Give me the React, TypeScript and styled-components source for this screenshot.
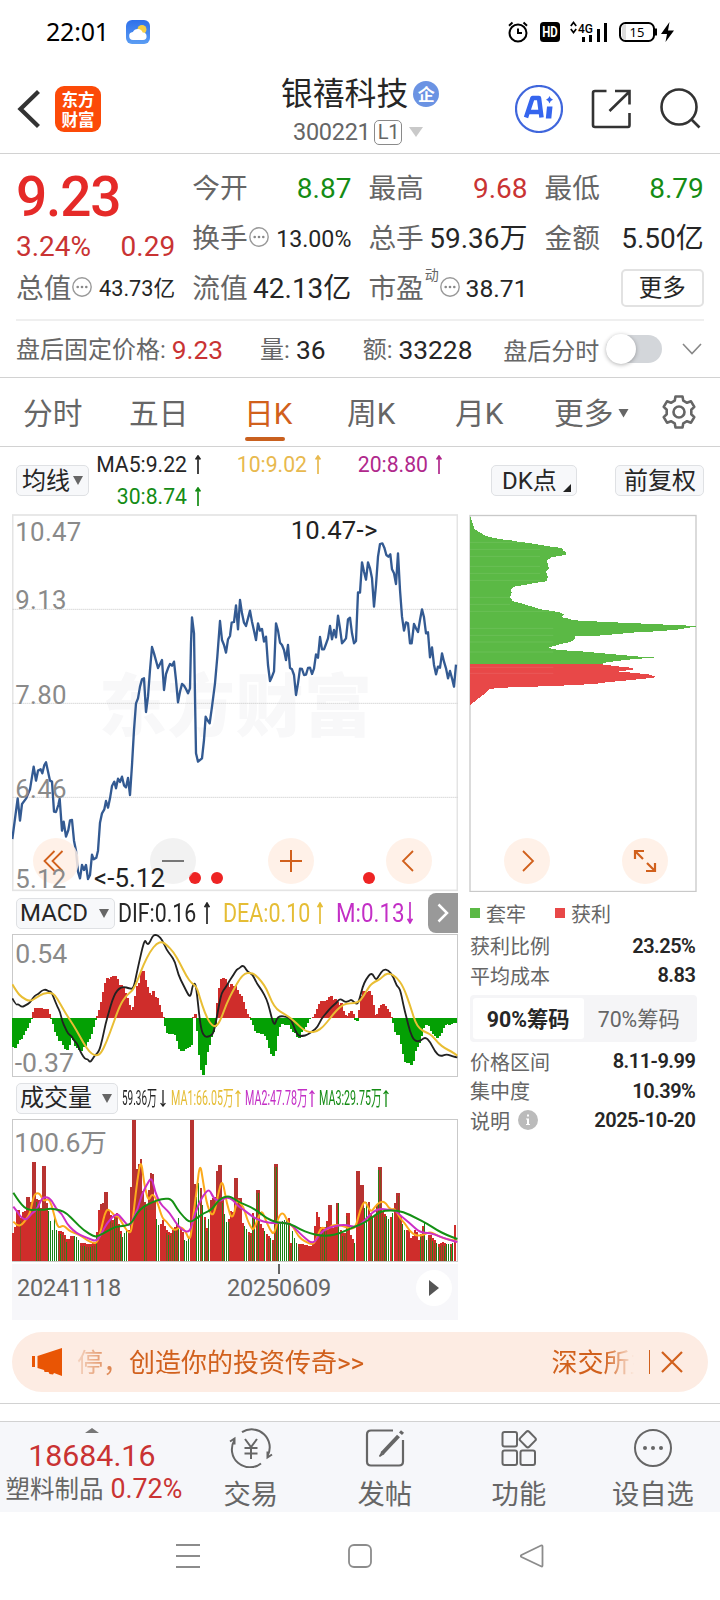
import React from "react";
import styled, { createGlobalStyle } from "styled-components";

const Global = createGlobalStyle`
  * { box-sizing: border-box; }
  body { margin: 0; background: #fff; color: #262626;
    font-family: Roboto, "Noto Sans CJK SC", sans-serif; font-weight: 400; }
  svg { display: block; flex: none; }
`;

const C = {
  red: "#c93333",
  green: "#158c15",
  grey: "#666",
  ink: "#262626",
  orange: "#d1601c",
  yellow: "#e5bd35",
  purple: "#c32fc6",
};

const Screen = styled.div`
  width: 720px;
  height: 1600px;
  overflow: hidden;
  display: flex;
  flex-direction: column;
  background: #fff;
`;

/* ---------- status bar ---------- */
const StatusBar = styled.div`
  height: 64px;
  flex: none;
  display: flex;
  align-items: center;
  padding: 0 45px 0 46px;
  color: #000;
`;
const Clock = styled.span`
  font: 400 25px/30px "Noto Sans", sans-serif;
  letter-spacing: -0.2px;
  width: 80px;
  margin-top: -2px;
`;
const StatusIcons = styled.div`
  margin-left: auto;
  display: flex;
  align-items: center;
`;

/* ---------- header ---------- */
const Header = styled.header`
  height: 90px;
  flex: none;
  display: flex;
  border-bottom: 1px solid #d2d2d2;
`;
const HeaderSide = styled.div<{ $w: number }>`
  width: ${(p) => p.$w}px;
  height: 90px;
  display: flex;
  align-items: center;
`;
const AppLogo = styled.div`
  width: 46px;
  height: 46px;
  margin: 0 0 0 15px;
  border-radius: 9px;
  background: #fc4a08;
  color: #fff;
  display: flex;
  flex-direction: column;
  align-items: center;
  justify-content: center;
  font: 700 16.5px/20px "Noto Sans CJK SC", sans-serif;
`;
const TitleBlock = styled.div`
  flex: 1;
  display: flex;
  flex-direction: column;
  padding-top: 11px;
`;
const TitleLine = styled.div`
  display: flex;
  align-items: center;
  height: 38px;
  padding-left: 21px;
  font-size: 31.8px;
  line-height: 38px;
`;
const CodeLine = styled.div`
  display: flex;
  align-items: center;
  height: 38px;
  padding-left: 33px;
  color: ${C.grey};
  font-size: 23.5px;
  letter-spacing: -0.3px;
`;
const CorpBadge = styled.span`
  width: 26px;
  height: 26px;
  margin-left: 5px;
  border-radius: 50%;
  background: #6b93e3;
  color: #fff;
  font: 700 17px/25px "Noto Sans CJK SC", sans-serif;
  text-align: center;
`;
const LevelTag = styled.span`
  width: 28px;
  height: 25px;
  margin: 0 7px 0 4px;
  border: 1.5px solid #8a8a8a;
  border-radius: 5px;
  font-size: 20px;
  line-height: 22px;
  text-align: center;
`;

/* ---------- quote ---------- */
const Quote = styled.section`
  flex: none;
  height: 167px;
  margin: 0 16px;
  padding-top: 10px;
  display: grid;
  grid-template-columns: repeat(4, 159.2px);
  grid-template-rows: repeat(3, 50px);
  column-gap: 17px;
  border-bottom: 2px solid #efefef;
`;
const LastPrice = styled.div`
  grid-row: 1 / 3;
  padding-top: 6px;
`;
const BigPrice = styled.div`
  font-size: 55px;
  font-weight: 500;
  line-height: 54px;
  color: #e52a28;
  letter-spacing: -1.2px;
`;
const Change = styled.div`
  display: flex;
  justify-content: space-between;
  height: 45px;
  align-items: center;
  font-size: 28px;
  color: ${C.red};
`;
const Cell = styled.div`
  display: flex;
  align-items: center;
  height: 50px;
`;
const Label = styled.span`
  font-size: 27.7px;
  line-height: 40px;
  color: ${C.grey};
  white-space: nowrap;
`;
const Value = styled.span<{ $c?: string; $s?: number }>`
  margin-left: auto;
  font-size: ${(p) => p.$s ?? 28}px;
  line-height: 40px;
  color: ${(p) => p.$c ?? C.ink};
  white-space: nowrap;
`;
const Dynamic = styled.sup`
  font-size: 14px;
  line-height: 14px;
  color: ${C.grey};
  align-self: flex-start;
  margin: 4px 1px 0 1px;
`;
const MoreButton = styled.button`
  width: 83px;
  height: 38px;
  margin-left: auto;
  margin-top: -3px;
  padding: 0;
  border: 2px solid #e2e2e2;
  border-radius: 5px;
  background: #fff;
  color: ${C.ink};
  font: 23.5px/34px Roboto, "Noto Sans CJK SC", sans-serif;
`;

/* ---------- after-hours ---------- */
const AfterHours = styled.section`
  height: 57px;
  flex: none;
  display: flex;
  align-items: center;
  padding: 0 18px 0 16px;
  border-bottom: 1px solid #d2d2d2;
  font-size: 24px;
  color: ${C.grey};
  white-space: nowrap;
`;
const AfterItem = styled.div<{ $w: number }>`
  width: ${(p) => p.$w}px;
  display: flex;
  align-items: center;
  padding-top: 2px;
  line-height: 34px;
`;
const AfterValue = styled.b<{ $c?: string }>`
  font-weight: 400;
  font-size: 26.3px;
  margin-left: 6px;
  color: ${(p) => p.$c ?? C.ink};
`;
const Toggle = styled.div`
  width: 56px;
  height: 28px;
  margin: 0 20px 0 7px;
  border-radius: 14px;
  background: #d3d6da;
  display: flex;
  align-items: center;
`;
const Knob = styled.i`
  width: 30px;
  height: 30px;
  border-radius: 50%;
  background: #fff;
  box-shadow: 0 1px 4px rgba(0, 0, 0, 0.3);
`;

/* ---------- period tabs ---------- */
const Tabs = styled.nav`
  height: 69px;
  flex: none;
  display: flex;
  border-bottom: 1px solid #d2d2d2;
  padding-left: 23px;
`;
const Tab = styled.div<{ $on?: boolean; $w: number }>`
  width: ${(p) => p.$w}px;
  height: 68px;
  display: flex;
  flex-direction: column;
  padding-top: 13px;
  font-size: 29.7px;
  line-height: 46px;
  color: ${(p) => (p.$on ? C.orange : C.grey)};
`;
const TabText = styled.span`
  display: flex;
  align-items: center;
  height: 46px;
`;
const TabLine = styled.i`
  width: 40px;
  height: 4px;
  margin-left: 1px;
  border-radius: 2px;
  background: #c9601f;
`;

/* ---------- moving average row ---------- */
const MaRow = styled.div`
  height: 67px;
  flex: none;
  display: flex;
  padding: 0 16px;
`;
const Chip = styled.button<{ $w: number }>`
  width: ${(p) => p.$w}px;
  height: 31px;
  flex: none;
  display: flex;
  align-items: center;
  justify-content: space-between;
  padding: 0 5px;
  border: 1.5px solid #dfe1e4;
  border-radius: 5px;
  background: #f7f8fa;
  color: ${C.ink};
  font: 24px/28px Roboto, "Noto Sans CJK SC", sans-serif;
  white-space: nowrap;
`;
const MaChip = styled(Chip)`
  margin-top: 18px;
`;
const MaList = styled.div`
  width: 390px;
  margin-left: 7px;
  padding-top: 1px;
  display: grid;
  grid-template-columns: 107px 120px 121px;
  grid-template-rows: 32px 32px;
`;
const MaItem = styled.div<{ $c: string }>`
  display: flex;
  align-items: center;
  justify-content: flex-end;
  gap: 6px;
  font-size: 21.2px;
  color: ${(p) => p.$c};
  white-space: nowrap;
`;

/* ---------- chart area ---------- */
const Charts = styled.div`
  flex: none;
  height: 818px;
  display: flex;
  padding-left: 12px;
`;
const Left = styled.div`
  width: 446px;
  position: relative;
`;
const Right = styled.aside`
  width: 229px;
  margin-left: 11px;
  position: relative;
`;
const RoundButton = styled.button<{ $x: number; $grey?: boolean }>`
  position: absolute;
  left: ${(p) => p.$x}px;
  top: 324px;
  width: 46px;
  height: 46px;
  padding: 0;
  border: 0;
  border-radius: 50%;
  background: ${(p) => (p.$grey ? "rgba(235,235,235,.65)" : "rgba(255,238,228,.85)")};
`;
const IndicatorRow = styled.div`
  height: 42px;
  display: flex;
  align-items: center;
  padding-left: 4px;
`;
const Squeeze = styled.span<{ $w: number; $k: number; $s: number; $c: string; $gap: number }>`
  width: ${(p) => p.$w}px;
  margin-left: ${(p) => p.$gap}px;
  font-size: ${(p) => p.$s}px;
  line-height: 30px;
  color: ${(p) => p.$c};
  white-space: nowrap;
  transform: scaleX(${(p) => p.$k});
  transform-origin: left center;
`;
const NextButton = styled.button`
  width: 30px;
  height: 40px;
  margin-left: auto;
  padding: 0;
  display: flex;
  align-items: center;
  justify-content: center;
  border: 0;
  border-radius: 8px 0 0 8px;
  background: #999;
`;
const DateStrip = styled.div`
  height: 56px;
  margin-top: 2px;
  background: #f7f7fa;
  display: flex;
  align-items: flex-start;
  color: ${C.grey};
  font-size: 23.5px;
`;
const DateText = styled.span<{ $l: number }>`
  margin: 9px 0 0 ${(p) => p.$l}px;
  width: 105px;
  line-height: 30px;
  letter-spacing: -0.2px;
`;
const Tick = styled.i`
  position: absolute;
  left: 266px;
  top: 750px;
  width: 2px;
  height: 10px;
  background: #666;
`;
const PlayButton = styled.div`
  width: 36px;
  height: 36px;
  margin: 6px 6px 0 auto;
  border-radius: 50%;
  background: #fff;
  display: flex;
  align-items: center;
  justify-content: center;
`;

/* ---------- chip stats ---------- */
const Legend = styled.div`
  height: 42px;
  display: flex;
  align-items: center;
  font-size: 20px;
  color: ${C.grey};
`;
const Square = styled.i<{ $c: string; $l: number }>`
  width: 10px;
  height: 10px;
  margin: 0 6px 0 ${(p) => p.$l}px;
  background: ${(p) => p.$c};
`;
const Stat = styled.div`
  height: 29.4px;
  padding: 0 3px 0 1px;
  display: flex;
  align-items: center;
  justify-content: space-between;
  font-size: 20px;
  color: ${C.grey};
  b { color: ${C.ink}; font-weight: 600; letter-spacing: -0.5px; margin-right: -0.4px; }
  span { display: flex; align-items: center; gap: 8px; }
`;
const Segment = styled.div`
  height: 47px;
  margin: 5px 1px;
  padding: 3px;
  display: flex;
  border-radius: 4px;
  background: #f5f5f7;
`;
const SegmentItem = styled.div<{ $on?: boolean }>`
  flex: 1;
  border-radius: 3px;
  background: ${(p) => (p.$on ? "#fff" : "transparent")};
  color: ${(p) => (p.$on ? C.ink : C.grey)};
  font-weight: ${(p) => (p.$on ? 700 : 400)};
  font-size: 21.3px;
  line-height: 43px;
  text-align: center;
`;

/* ---------- banner ---------- */
const Banner = styled.div`
  height: 60px;
  flex: none;
  margin: 0 12px 11px;
  padding: 0 25px 0 20px;
  display: flex;
  align-items: center;
  border-radius: 30px;
  background: #fdece3;
  color: ${C.orange};
  font-size: 26px;
`;
const Marquee = styled.div`
  flex: 1;
  height: 42px;
  margin: 0 13px 0 15px;
  display: flex;
  justify-content: space-between;
  overflow: hidden;
  line-height: 44px;
  white-space: nowrap;
  mask-image: linear-gradient(90deg, transparent -10px, #000 50px, #000 calc(100% - 32px), transparent calc(100% - 2px));
`;
const MarqueeTail = styled.span`
  width: 84px;
  overflow: hidden;
`;
const Divider = styled.i`
  width: 1.5px;
  height: 24px;
  margin-right: 11px;
  background: ${C.orange};
`;

/* ---------- bottom ---------- */
const Strip = styled.div`
  height: 18px;
  flex: none;
  border-top: 1px solid #d2d2d2;
`;
const BottomBar = styled.footer`
  height: 91px;
  flex: none;
  display: flex;
  border-top: 1px solid #d2d2d2;
  background: #f6f7fa;
`;
const IndexBox = styled.div`
  width: 184px;
  display: flex;
  flex-direction: column;
  align-items: center;
  padding-top: 6px;
  color: ${C.red};
`;
const IndexValue = styled.div`
  margin-top: 5px;
  font-size: 30.3px;
  line-height: 36px;
`;
const IndexName = styled.div`
  font-size: 26.8px;
  line-height: 31px;
  white-space: nowrap;
  margin-left: 4px;
  em { font-style: normal; font-size: 24.5px; color: ${C.grey}; margin-right: 7px; }
`;
const Action = styled.div`
  width: 134.3px;
  display: flex;
  flex-direction: column;
  align-items: center;
  padding-top: 6px;
  color: ${C.grey};
  font-size: 27.3px;
  line-height: 44px;
  white-space: nowrap;
  gap: 5px;
`;
const SystemNav = styled.div`
  flex: 1;
  display: flex;
  align-items: center;
  justify-content: space-between;
  padding: 0 176px;
`;

/* ---------- small drawings ---------- */
const Tri = ({ w = 10, h = 9, c = "#666" }: { w?: number; h?: number; c?: string }) => (
  <svg width={w} height={h} viewBox="0 0 10 9" preserveAspectRatio="none"><path d="M0 0h10L5 9z" fill={c} /></svg>
);
const Arrow = ({ down, h = 19, w = 1.7 }: { down?: boolean; h?: number; w?: number }) => (
  <svg width="10" height={h} viewBox="0 0 10 19" preserveAspectRatio="none" fill="none" stroke="currentColor" strokeWidth={w}>
    {down ? <path d="M5 0v18M2.6 14.5 5 18l2.4-3.5" /> : <path d="M5 19V1M2.6 4.5 5 1l2.4 3.5" />}
  </svg>
);
const Dots = ({ m = "0" }: { m?: string }) => (
  <svg width="20" height="20" viewBox="0 0 20 20" style={{ margin: m }}>
    <circle cx="10" cy="10" r="9.2" fill="none" stroke="#999" strokeWidth="1.4" />
    <g fill="#888"><circle cx="5.7" cy="10" r="1.3" /><circle cx="10" cy="10" r="1.3" /><circle cx="14.3" cy="10" r="1.3" /></g>
  </svg>
);

/* ---------- chart data ---------- */
type Pt = [number, number];
const parse = (s: string, dx = 0): Pt[] =>
  s.trim().split(/\s+/).map((p) => {
    const [x, y] = p.split(",").map(Number);
    return [x + dx, y];
  });
const join = (a: string, b: string): Pt[] => [...parse(a), ...parse(b, 690)];
const toPoints = (p: Pt[]) => p.map((q) => q.join(",")).join(" ");
const sample = (p: Pt[], x: number) => {
  const i = p.findIndex((q) => q[0] >= x);
  if (i < 0) return p[p.length - 1][1];
  if (i === 0) return p[0][1];
  const [x0, y0] = p[i - 1];
  const [x1, y1] = p[i];
  return y0 + ((y1 - y0) * (x - x0)) / (x1 - x0 || 1);
};
const smooth = (p: Pt[]) => {
  let d = `M${p[0]}`;
  for (let i = 1; i < p.length - 1; i++) {
    d += `Q${p[i]} ${(p[i][0] + p[i + 1][0]) / 2},${(p[i][1] + p[i + 1][1]) / 2}`;
  }
  return d + `L${p[p.length - 1]}`;
};

const price = join(
  `37,987 53,865 60,932 66,882 78,866 90,838 101,770 108,812 114,782 122,778 127,790 133,765 138,757 150,812 156,815 162,905 168,906 175,885 179,866 186,962 191,935 198,980 205,960 210,931 216,930 222,992 228,1022 234,1085 240,1105 246,1065 252,1080 258,1065 264,1107 270,1095 276,1034 281,1048 289,1043 294,1022 300,938 306,910 313,898 318,873 324,893 330,865 336,828 343,815 348,835 354,806 360,816 366,800 372,826 378,832 384,804 390,855 396,765 402,660 408,580 414,565 420,530 426,508 432,505 438,606 444,560 450,480 456,411 462,430 474,474 486,450 492,540 498,492 504,475 510,462 516,467 522,455 528,510 534,577 540,545 546,522 552,527 558,537 564,550 570,535 573,400 576,322 582,370 585,560 588,730 594,755 606,745 612,690 617,620 622,630 629,640 636,590 645,520 652,440 660,333 666,390 672,405 678,428 684,388 690,378`,
  `5,338 12,336 18,286 24,358 30,270 36,310 42,338 48,348 54,325 60,302 66,335 72,362 78,390 84,340 90,362 96,357 102,395 108,380 114,465 120,513 126,500 132,484 138,340 144,362 150,398 156,405 162,420 168,450 174,405 180,474 186,478 192,495 198,555 204,520 210,476 216,477 222,495 228,494 234,474 240,473 246,492 252,476 258,433 264,443 270,381 276,418 282,418 288,402 294,385 300,348 306,388 312,360 318,382 324,317 330,355 336,400 342,393 348,385 354,328 360,323 366,370 372,400 378,393 384,247 390,248 396,157 402,185 408,209 414,157 420,175 426,205 432,290 438,225 444,140 450,102 457,100 463,113 469,135 475,140 481,133 486,178 492,190 498,222 504,130 510,240 516,320 522,362 528,337 534,340 540,400 545,400 552,342 558,355 564,366 570,330 576,298 582,322 588,370 594,367 600,442 606,412 612,465 618,493 624,470 630,473 636,430 642,455 648,475 654,505 660,483 666,505 672,530 678,464`
);
const hist = join(
  `37,468 45,475 48,472 54,455 60,448 66,445 72,430 78,420 84,412 90,393 96,384 99,372 102,355 126,354 129,357 144,358 150,378 153,383 159,398 164,420 174,443 180,456 186,452 192,470 198,480 206,478 212,442 218,448 224,455 228,478 234,470 240,483 246,485 252,465 258,468 264,452 270,445 276,425 282,405 288,384 294,375 300,352 306,330 312,295 318,272 322,265 330,267 336,260 345,258 352,268 358,285 366,285 374,305 380,318 387,340 393,362 399,355 405,325 411,288 417,285 423,248 430,244 436,270 442,290 448,310 454,315 460,303 466,322 472,325 478,345 484,365 490,380 496,408 502,428 510,432 526,434 534,460 540,485 550,483 558,475 570,470 575,465 577,400 579,384 586,373 589,385 595,460 600,518 606,550 610,556 616,525 622,485 628,465 634,440 640,425 646,410 648,384 651,345 656,310 661,270 668,265 672,262 678,270 684,286`,
  `0,295 6,275 10,288 20,286 24,315 30,310 36,322 42,342 48,365 54,377 60,383 66,393 72,410 78,428 90,430 100,433 108,438 114,455 120,485 128,500 135,490 140,450 146,417 152,403 162,402 170,410 175,400 180,410 186,420 192,428 198,430 204,448 210,440 216,420 222,417 228,408 234,395 240,385 246,384 252,380 258,370 264,352 272,333 290,333 298,320 304,318 308,330 316,328 322,335 328,345 334,340 340,362 346,375 352,378 358,370 363,362 370,372 374,388 380,398 384,385 388,360 392,330 396,308 405,300 410,308 420,303 426,320 430,345 436,375 440,378 444,368 450,348 458,340 464,345 470,355 476,362 482,378 486,384 490,400 496,425 500,440 506,425 512,455 518,480 524,512 530,520 538,518 545,525 550,512 556,482 562,470 570,455 576,430 582,405 590,402 600,410 606,428 612,432 620,445 630,438 636,425 642,410 648,402 660,405 668,400 676,400`
);
const dif = join(
  `37,325 48,345 54,342 66,352 78,345 90,338 100,322 108,315 115,312 125,302 137,298 147,305 153,303 162,325 172,350 180,365 187,395 195,412 205,433 215,438 222,452 230,458 237,475 244,490 255,508 263,507 270,517 277,508 285,495 297,485 307,448 317,400 327,365 337,330 347,308 357,296 370,290 388,295 397,297 403,285 410,250 420,205 427,175 435,148 440,162 447,162 457,140 464,134 475,137 487,150 500,180 512,195 525,215 535,255 550,285 565,315 572,320 578,285 586,278 592,320 598,380 605,425 615,441 625,440 632,437 640,430 648,395 658,340 665,308 675,295 690,270`,
  `10,255 20,238 28,235 37,226 45,232 52,245 68,253 80,280 95,300 110,328 118,355 128,395 135,405 140,385 150,378 170,380 185,390 195,420 205,438 218,438 232,435 250,422 262,412 275,385 290,368 305,350 318,340 330,325 345,337 357,333 365,328 380,345 388,330 398,290 408,268 425,246 438,272 448,255 460,238 475,240 490,260 500,288 510,295 520,345 530,385 540,425 552,452 570,455 585,440 600,455 615,485 630,500 650,492 670,500 682,502`
);
const dea = join(
  `37,283 50,305 65,322 90,335 110,322 130,310 153,308 165,315 180,340 200,375 220,405 240,440 260,475 275,492 290,497 303,490 320,455 340,400 360,345 380,315 400,300 415,265 430,225 450,185 470,160 487,155 500,165 520,185 540,220 560,260 575,280 590,290 600,325 615,370 630,400 645,412 660,395 680,340`,
  `10,300 30,265 45,250 60,248 75,253 95,275 110,297 125,335 140,358 160,370 180,383 200,400 220,420 240,427 260,425 280,410 300,385 320,360 340,343 360,340 385,338 400,320 420,285 435,275 450,268 465,253 480,250 500,262 520,290 540,345 555,395 570,418 590,428 605,435 625,460 645,475 665,485 682,497`
);
const volume = join(
  `40,1030 46,1010 50,958 58,960 60,985 66,985 68,965 80,962 82,920 88,922 92,950 98,905 100,815 106,815 107,925 120,930 128,980 130,828 137,828 138,925 146,950 150,975 160,1020 164,965 170,1020 175,1022 190,1025 205,1052 215,1038 235,1040 240,1058 270,1062 290,1058 294,992 300,945 311,940 316,906 323,906 324,950 340,990 352,968 360,1012 372,1045 380,1015 390,1020 394,890 399,885 400,690 407,690 408,825 416,850 419,808 425,808 426,880 440,960 448,900 454,850 461,852 462,890 470,980 480,1010 490,990 500,1020 515,1030 525,1010 530,1015 536,975 542,1005 550,1025 558,1060 568,1040 573,960 574,690 581,690 582,960 588,845 594,960 600,840 606,920 616,980 625,1030 632,930 646,920 648,842 656,842 658,825 664,825 666,900 680,1000 690,985`,
  `0,960 10,965 16,864 23,864 24,950 28,925 35,925 40,1000 60,1030 68,1030 72,905 76,980 82,900 88,900 92,1000 110,1030 130,1050 135,950 136,823 143,823 145,1000 165,990 172,985 178,985 184,1060 192,1010 198,1060 205,1060 245,1068 255,1050 257,965 263,965 266,985 270,977 274,1010 290,1010 298,945 304,945 306,1015 320,1010 322,940 328,940 332,1015 345,1040 352,970 358,970 362,1030 376,1060 380,1040 382,842 388,842 391,990 394,885 400,885 403,965 412,935 418,935 425,975 440,980 448,832 455,832 458,960 480,990 490,970 502,909 508,909 512,970 525,1020 540,1020 545,1050 560,1010 566,1055 575,1030 585,985 590,1055 600,1030 625,1062 640,1055 650,1062 670,1060 675,1005 681,1005`
);
// Spans where falling days are drawn as slim green bars.
const fallingSpans: Pt[] = [
  [144, 172], [220, 240], [364, 384], [466, 478], [530, 537], [552, 568], [584, 596], [604, 610], [622, 628], [670, 680],
  [728, 744], [760, 768], [788, 794], [808, 816], [834, 862], [872, 892], [1010, 1018], [1062, 1068], [1090, 1100], [1112, 1118],
  [1156, 1166], [1176, 1182], [1202, 1216], [1268, 1280], [1292, 1296], [1308, 1312], [1338, 1346], [1356, 1362],
];
// Spans where rising and falling days alternate closely.
const mixedSpans: Pt[] = [
  [60, 66], [108, 126], [172, 200], [240, 290], [330, 362], [428, 444], [494, 530], [600, 630], [664, 690],
  [732, 780], [800, 830], [862, 900], [960, 985], [1010, 1040], [1108, 1160], [1190, 1215], [1260, 1362],
];
const within = (spans: Pt[], x: number) => spans.some(([a, b]) => x >= a && x < b);
const vma1 = join(
  `40,995 52,1008 66,1005 80,985 90,970 97,935 105,910 120,910 130,935 145,925 155,945 165,985 175,1015 190,1005 205,1020 220,1028 240,1035 260,1050 280,1060 292,1058 303,1020 318,955 335,965 345,980 355,978 372,1010 388,1030 395,1020 402,955 412,870 423,805 432,880 445,935 455,912 465,920 475,945 487,985 500,995 512,1012 525,1022 540,1010 555,1020 570,1055 577,1000 590,900 600,815 610,880 622,950 640,985 655,910 667,865 680,940`,
  `7,995 22,925 30,940 40,950 52,990 62,1010 70,1022 82,990 95,960 105,985 120,1020 133,1035 145,980 160,965 175,1000 190,1010 205,1040 225,1055 250,1065 260,1045 275,1008 290,1022 305,1005 325,1005 345,1010 365,1018 378,1010 390,960 405,930 415,955 425,965 435,950 450,935 465,935 480,960 495,955 510,985 525,1000 540,1025 560,1038 580,1035 600,1025 620,1035 640,1045 665,1050 680,1053`
);
const vma2 = join(
  `40,950 52,965 65,985 80,990 95,970 110,960 125,925 140,920 155,930 170,960 185,970 200,1000 220,1022 240,1035 265,1045 290,1055 305,1030 320,1000 350,968 365,985 388,1012 400,985 412,960 425,915 440,885 455,860 465,905 480,940 495,955 510,970 525,995 545,1020 570,1028 580,985 595,945 610,915 628,896 640,925 660,935 680,920`,
  `10,930 20,945 35,955 55,970 75,985 100,995 130,1000 155,998 180,1000 200,1020 220,1040 250,1064 270,1030 290,1015 310,1010 330,1005 350,1005 380,1012 395,1000 415,980 430,965 450,955 475,960 495,960 515,980 540,1000 570,1028 600,1028 630,1040 660,1050 682,1056`
);
const vma3 = join(
  `40,908 60,940 85,962 110,958 130,960 150,955 180,960 200,970 225,995 250,1020 285,1042 300,1035 320,1025 345,1010 375,1008 395,1000 410,970 430,950 460,935 475,930 495,925 515,928 530,955 550,980 570,998 590,985 610,970 635,960 660,925 685,918`,
  `10,925 30,938 60,950 85,965 110,985 140,998 180,1000 210,1018 240,1030 270,1037 300,1037 330,1030 350,1020 375,1010 400,1000 430,980 450,965 480,960 520,965 560,985 590,1000 620,1020 650,1035 682,1047`
);
// Holdings by price: depth from the top, then the width of the bar.
const holdings: Pt[] = parse(
  `30,32 36,50 44,72 60,82 75,92 100,98 120,102 150,105 170,109 205,113 235,118 262,123 290,126 305,130 312,138 318,142 318,149 300,152 275,156 262,165 263,180 268,190 258,200 263,215 260,228 228,233 200,238 165,244 152,252 155,262 150,275 158,288 182,294 215,304 240,312 267,316 300,322 312,328 305,336 325,340 337,345 390,348 475,352 565,356 650,360 708,362 708,364 684,368 655,373 598,378 522,382 468,387 420,391 346,394 343,402 332,410 305,416 285,422 266,427 280,432 305,435 370,439 425,444 480,449 533,454 583,457 520,462 475,467 430,473 430,478 468,483 508,487 525,492 478,499 522,503 567,508 592,516 540,522 487,527 435,532 405,536 337,540 235,544 143,547 90,551 75,565 55,580 30,600`
).map(([x, y]) => [y, x]);
const levels = Array.from({ length: 190 }, (_, i) => 33 + i * 3);

const barXs = Array.from({ length: 222 }, (_, i) => 37 + i * 6);

const PriceChart = () => (
  <svg width="446" height="378" viewBox="36 12 1338 1134" fontFamily="Roboto, sans-serif">
    <text x="296" y="664" fontSize="204" fontWeight="900" fontFamily="Noto Sans CJK SC" fill="#f8f8f9" textLength="820">东方财富</text>
    <rect x="38" y="15" width="1334" height="1126" fill="none" stroke="#e4e4e4" strokeWidth="5" />
    {[298, 580, 862].map((y) => (
      <path key={y} d={`M38 ${y}H1372`} stroke="#c4c4c4" strokeWidth="3" strokeDasharray="3 3" />
    ))}
    <polyline points={toPoints(price)} fill="none" stroke="#335a92" strokeWidth="7" strokeLinejoin="round" />
    <g fontSize="77.500" fill="#8a8a8a" letterSpacing="0.8">
      <text x="46" y="93">10.47</text>
      <text x="46" y="296">9.13</text>
      <text x="46" y="582">7.80</text>
      <text x="46" y="864">6.46</text>
    </g>
    <g fontSize="77" fill="#222">
      <text x="872" y="87" textLength="260">{"10.47->"}</text>
    </g>
    <g fill="#ee2424"><circle cx="585" cy="1104" r="18" /><circle cx="651" cy="1104" r="18" /><circle cx="1107" cy="1104" r="18" /></g>
  </svg>
);
const Overlay = styled.svg`
  position: absolute;
  left: 0;
  top: 344px;
`;

const MacdChart = () => (
  <svg width="446" height="143" viewBox="36 132 1338 429">
    <rect x="37.5" y="133.5" width="1335" height="426" fill="#fff" stroke="#c9c9c9" strokeWidth="3" />
    <g shapeRendering="crispEdges">
      {barXs.map((x) => {
        const y = sample(hist, x + 3);
        return <rect key={x} x={x} width="6.5" y={Math.min(y, 384)} height={Math.abs(384 - y)} fill={y < 384 ? "#cf2d2b" : "#04a004"} />;
      })}
    </g>
    <path d={smooth(dif)} fill="none" stroke="#222" strokeWidth="5.500" />
    <path d={smooth(dea)} fill="none" stroke="#e9be34" strokeWidth="6" />
    <g fontFamily="Roboto, sans-serif" fontSize="80" fill="#8a8a8a">
      <text x="46" y="219">0.54</text>
      <text x="44" y="545">-0.37</text>
    </g>
  </svg>
);

const VolumeChart = () => (
  <svg width="446" height="143" viewBox="36 687 1338 429">
    <rect x="37.5" y="688.5" width="1335" height="426" fill="#fff" stroke="#c9c9c9" strokeWidth="3" />
    <g shapeRendering="crispEdges">
      {barXs.map((x, i) => {
        const y = sample(volume, x + 3);
        const h = 1113 - y;
        if (within(fallingSpans, x)) return <rect key={x} x={x} width="3" y={y} height={h} fill="#168316" />;
        const mixed = within(mixedSpans, x);
        return (
          <g key={x}>
            <rect x={x} width="6" y={y} height={h} fill={h > 160 ? "#b83331" : "#cf2d2b"} />
            {h > 160 && <rect x={x} width="6" y={Math.max(y, 960)} height={Math.min(h, 153)} fill="#cf2d2b" />}
            {mixed && <rect x={x} width="3" y={y + 9} height={h - 9} fill={i % 3 ? "#7a521f" : "#2a821a"} />}
          </g>
        );
      })}
    </g>
    <g fill="none" strokeWidth="6">
      <path d={smooth(vma1)} stroke="#fcab1c" />
      <path d={smooth(vma2)} stroke="#cc2fc6" />
      <path d={smooth(vma3)} stroke="#149014" />
    </g>
    <text x="43" y="786" fontFamily="Roboto, Noto Sans CJK SC, sans-serif" fontSize="80" fill="#8a8a8a" textLength="278">100.6万</text>
  </svg>
);

const ChipChart = () => (
  <svg width="229" height="378" viewBox="27 27 687 1134">
    <rect x="30" y="31.5" width="678" height="1128" fill="none" stroke="#c9c9c9" strokeWidth="4" />
    <g shapeRendering="crispEdges">
      {levels.map((y) => (
        <rect key={y} x="30" y={y} width={Math.max(sample(holdings, y + 1) - 30, 1)} height="3" fill={y < 476 ? "#5bb945" : "#e84848"} />
      ))}
    </g>
    <g stroke="#fff" strokeOpacity=".14" strokeWidth="2">
      {[112, 133, 154, 184, 205, 226].map((y) => <path key={y} d={`M30 ${y}H240`} />)}
      {[277, 298].map((y) => <path key={y} d={`M30 ${y}H150`} />)}
      {[319, 370, 391, 411, 441, 487, 505].map((y) => <path key={y} d={`M30 ${y}H280`} />)}
    </g>
  </svg>
);

const Glyph = ({ d, w = 1.8, c = "#d1601c" }: { d: string; w?: number; c?: string }) => (
  <svg width="46" height="46" viewBox="0 0 46 46" fill="none" stroke={c} strokeWidth={w}><path d={d} /></svg>
);

export default function App() {
  return (
    <Screen>
      <Global />
      <StatusBar>
        <Clock>22:01</Clock>
        <svg width="24" height="24" viewBox="0 0 24 24">
          <defs><linearGradient id="sky" x2="0" y2="1"><stop stopColor="#2f70ea" /><stop offset="1" stopColor="#5b9df3" /></linearGradient></defs>
          <rect width="24" height="24" rx="6" fill="url(#sky)" />
          <circle cx="16" cy="9.5" r="4.5" fill="#f7cf45" />
          <path d="M7.5 20a4 4 0 0 1-.6-8 5.3 5.3 0 0 1 9.8.6A3.7 3.7 0 0 1 17 20z" fill="#fff" />
        </svg>
        <StatusIcons>
          <svg width="20" height="22" viewBox="0 0 20 22" fill="none" stroke="#000" strokeWidth="2">
            <circle cx="10" cy="12" r="8.5" /><path d="M10 7.5V12h4M1 4.8 4.5 1.6M19 4.8l-3.500-3.200" />
          </svg>
          <svg width="20" height="20" viewBox="0 0 20 20" style={{ marginLeft: 12 }}>
            <rect width="20" height="20" rx="3.5" />
            <text x="10" y="15" fontSize="14" fontWeight="700" fill="#fff" textAnchor="middle" textLength="15.500" lengthAdjust="spacingAndGlyphs" fontFamily="Roboto">HD</text>
          </svg>
          <svg width="38" height="22" viewBox="0 0 38 22" style={{ marginLeft: 10 }}>
            <path d="M.8 5 3.500 1.500 6.200 5M.8 8l2.700 3.500L6.200 8" fill="none" stroke="#000" strokeWidth="1.700" />
            <text x="8" y="11.500" fontSize="13.500" fontWeight="500" fontFamily="Roboto" textLength="15" lengthAdjust="spacingAndGlyphs">4G</text>
            <path d="M12 16h3v5h-3zM19 14h3v7h-3zM27 8h3v13h-3zM34 2h3v19h-3z" />
          </svg>
          <svg width="56" height="22" viewBox="0 0 56 22" style={{ marginLeft: 11 }}>
            <rect x="1" y="2" width="34" height="18" rx="5.500" fill="#fff" stroke="#000" strokeWidth="2" />
            <path d="M3 6.500q0-3 4-3.500v16q-4-.5-4-3.500z" fill="#ddd" />
            <path d="M37 7.500v7" stroke="#000" strokeWidth="2" />
            <text x="18" y="15.500" fontSize="13" textAnchor="middle" textLength="15" fontFamily="Noto Sans">15</text>
            <path d="M50.500 1 42 13h6l-1.500 8L55 9.500h-6z" />
          </svg>
        </StatusIcons>
      </StatusBar>

      <Header>
        <HeaderSide $w={260}>
          <svg width="23" height="40" viewBox="0 0 23 40" style={{ marginLeft: 17 }}><path d="M21.500 2.500 3.500 20l18 17.500" fill="none" stroke="#333" strokeWidth="4.300" /></svg>
          <AppLogo><span>东方</span><span>财富</span></AppLogo>
        </HeaderSide>
        <TitleBlock>
          <TitleLine>银禧科技<CorpBadge>企</CorpBadge></TitleLine>
          <CodeLine>300221<LevelTag>L1</LevelTag><Tri w={14} h={10} c="#c9c9c9" /></CodeLine>
        </TitleBlock>
        <HeaderSide $w={205}>
          <svg width="48" height="48" viewBox="0 0 48 48">
            <circle cx="24" cy="24" r="23" fill="none" stroke="#3f66dc" strokeWidth="2.200" />
            <path d="M11 32.500 17.500 13h6.500l2.500 19.500M13.500 27h12" fill="none" stroke="#3565ee" strokeWidth="4.500" strokeLinejoin="round" />
            <path d="M32 21.500h5.500l-1.200 12h-5.500z" fill="#3565ee" />
            <path d="M34.500 11q.8 3 3.500 3.800-2.700.8-3.500 3.800-.8-3-3.500-3.800 2.700-.8 3.500-3.800z" fill="#3565ee" />
          </svg>
          <svg width="40" height="40" viewBox="0 0 40 40" fill="none" stroke="#333" strokeWidth="2.600" style={{ marginLeft: 28 }}>
            <path d="M15.500 2H4Q2 2 2 4v32q0 2 2 2h33q1.500 0 1.500-2V24M24 2h14.500v13.500M38 3 18.500 22" />
          </svg>
          <svg width="42" height="42" viewBox="0 0 42 42" fill="none" stroke="#333" strokeWidth="2.600" style={{ marginLeft: 28 }}>
            <circle cx="20" cy="19" r="17.500" /><path d="m32 31 8.500 8.500" />
          </svg>
        </HeaderSide>
      </Header>

      <Quote>
        <LastPrice>
          <BigPrice>9.23</BigPrice>
          <Change><span>3.24%</span><span>0.29</span></Change>
        </LastPrice>
        <Cell><Label>今开</Label><Value $c={C.green}>8.87</Value></Cell>
        <Cell><Label>最高</Label><Value $c={C.red}>9.68</Value></Cell>
        <Cell><Label>最低</Label><Value $c={C.green}>8.79</Value></Cell>
        <Cell><Label>换手</Label><Dots m="-4px 0 0 1px" /><Value $s={23.2}>13.00%</Value></Cell>
        <Cell><Label>总手</Label><Value>59.36万</Value></Cell>
        <Cell><Label>金额</Label><Value>5.50亿</Value></Cell>
        <Cell><Label>总值</Label><Dots m="-4px 0 0 1px" /><Value $s={21.7}>43.73亿</Value></Cell>
        <Cell><Label>流值</Label><Value>42.13亿</Value></Cell>
        <Cell><Label>市盈</Label><Dynamic>动</Dynamic><Dots m="-4px 0 0 0" /><Value $s={24.7}>38.71</Value></Cell>
        <Cell><MoreButton>更多</MoreButton></Cell>
      </Quote>

      <AfterHours>
        <AfterItem $w={245}>盘后固定价格:<AfterValue $c={C.red}>9.23</AfterValue></AfterItem>
        <AfterItem $w={103}>量:<AfterValue>36</AfterValue></AfterItem>
        <AfterItem $w={141}>额:<AfterValue>33228</AfterValue></AfterItem>
        盘后分时
        <Toggle><Knob /></Toggle>
        <svg width="20" height="12" viewBox="0 0 20 12" fill="none" stroke="#888" strokeWidth="1.600"><path d="m1 1 9 9.500L19 1" /></svg>
      </AfterHours>

      <Tabs>
        <Tab $w={106}><TabText>分时</TabText></Tab>
        <Tab $w={115}><TabText>五日</TabText></Tab>
        <Tab $w={103} $on><TabText>日K</TabText><TabLine /></Tab>
        <Tab $w={108}><TabText>周K</TabText></Tab>
        <Tab $w={99}><TabText>月K</TabText></Tab>
        <Tab $w={107}><TabText>更多<svg width="16" height="10" viewBox="0 0 16 10"><path d="M5.500 0h10l-5 8.500z" fill="#666" /></svg></TabText></Tab>
        <svg width="36" height="36" viewBox="0 0 36 36" fill="none" stroke="#666" strokeWidth="2.600" strokeLinejoin="round" style={{ marginTop: 16 }}>
          <path d="M14.500 2.500h7l.8 4.200 3.700 2.100 4-1.500 3.300 5.600-3 2.900v4.400l3 2.900-3.300 5.600-4-1.500-3.700 2.100-.8 4.200h-7l-.8-4.200-3.700-2.100-4 1.500-3.300-5.600 3-2.900v-4.400l-3-2.900L6 7.300l4 1.500 3.700-2.100z" />
          <circle cx="18" cy="18" r="5.500" />
        </svg>
      </Tabs>

      <MaRow>
        <MaChip $w={73}>均线<Tri /></MaChip>
        <MaList>
          <MaItem $c={C.ink}>MA5:9.22<Arrow /></MaItem>
          <MaItem $c="#e8b94e">10:9.02<Arrow /></MaItem>
          <MaItem $c="#b0288c">20:8.80<Arrow /></MaItem>
          <MaItem $c={C.green}>30:8.74<Arrow /></MaItem>
        </MaList>
        <MaChip $w={86} style={{ paddingLeft: 10, marginLeft: 5 }}>
          DK点<svg width="8" height="8" viewBox="0 0 8 8" style={{ marginTop: 14 }}><path d="M8 0v8H0z" fill="#222" /></svg>
        </MaChip>
        <MaChip $w={89} style={{ marginLeft: "auto", paddingLeft: 8 }}>前复权</MaChip>
      </MaRow>

      <Charts>
        <Left>
          <PriceChart />
          <RoundButton $x={21}><Glyph d="M21.500 13 11.500 23l10 10M29.500 13l-10 10 10 10" /></RoundButton>
          <RoundButton $x={138} $grey><Glyph d="M12 23h22" c="#777" w={2} /></RoundButton>
          <RoundButton $x={256}><Glyph d="M12 23h22M23 12v22" w={2} /></RoundButton>
          <RoundButton $x={374}><Glyph d="M27 13 17 23l10 10" /></RoundButton>
          <Overlay width="200" height="34" viewBox="0 0 200 34" fontFamily="Roboto, sans-serif" fontSize="25.800">
            <text x="3.300" y="30" fill="#8a8a8a" letterSpacing=".2">5.12</text>
            <text x="82" y="29" fill="#222" textLength="71">{"<-5.12"}</text>
          </Overlay>
          <IndicatorRow>
            <Chip $w={99} style={{ paddingLeft: 3 }}>MACD<Tri /></Chip>
            <Squeeze $w={84} $gap={3} $k={0.82} $s={26} $c={C.ink}>DIF:0.16</Squeeze><span style={{ color: C.ink }}><Arrow h={22} /></span>
            <Squeeze $w={92} $gap={11} $k={0.825} $s={26} $c={C.yellow}>DEA:0.10</Squeeze><span style={{ color: C.yellow }}><Arrow h={22} /></span>
            <Squeeze $w={69} $gap={11} $k={0.86} $s={26} $c={C.purple}>M:0.13</Squeeze><span style={{ color: C.purple }}><Arrow down h={22} /></span>
            <NextButton><svg width="12" height="20" viewBox="0 0 12 20" fill="none" stroke="#fff" strokeWidth="2.500"><path d="m1.500 1.500 8.500 8.500-8.500 8.500" /></svg></NextButton>
          </IndicatorRow>
          <MacdChart />
          <IndicatorRow>
            <Chip $w={102} style={{ paddingLeft: 3 }}>成交量<Tri /></Chip>
            <Squeeze $w={36} $gap={4} $k={0.475} $s={21} $c={C.ink}>59.36万</Squeeze><span style={{ color: C.ink }}><Arrow down h={17} w={1.3} /></span>
            <Squeeze $w={62} $gap={3} $k={0.51} $s={21} $c={C.yellow}>MA1:66.05万</Squeeze><span style={{ color: C.yellow }}><Arrow h={17} w={1.3} /></span>
            <Squeeze $w={62} $gap={2} $k={0.51} $s={21} $c={C.purple}>MA2:47.78万</Squeeze><span style={{ color: C.purple }}><Arrow h={17} w={1.3} /></span>
            <Squeeze $w={62} $gap={2} $k={0.51} $s={21} $c={C.green}>MA3:29.75万</Squeeze><span style={{ color: C.green }}><Arrow h={17} w={1.3} /></span>
          </IndicatorRow>
          <VolumeChart />
          <DateStrip>
            <DateText $l={5}>20241118</DateText>
            <DateText $l={105}>20250609</DateText>
            <PlayButton><svg width="10" height="16" viewBox="0 0 10 16"><path d="M0 0v16l10-8z" fill="#555" /></svg></PlayButton>
          </DateStrip>
          <Tick />
        </Left>
        <Right>
          <ChipChart />
          <RoundButton $x={35}><Glyph d="m19 13 10 10-10 10" /></RoundButton>
          <RoundButton $x={153}><Glyph d="M13 21v-8h9M13 13l8 8M33 25v8h-9M33 33l-8-8" w={2.2} /></RoundButton>
          <Legend><Square $c="#5bb945" $l={1} />套牢<Square $c="#e84848" $l={29} />获利</Legend>
          <Stat style={{ marginTop: -3 }}>获利比例<b>23.25%</b></Stat>
          <Stat>平均成本<b>8.83</b></Stat>
          <Segment><SegmentItem $on>90%筹码</SegmentItem><SegmentItem>70%筹码</SegmentItem></Segment>
          <Stat>价格区间<b>8.11-9.99</b></Stat>
          <Stat>集中度<b>10.39%</b></Stat>
          <Stat>
            <span>说明<svg width="20" height="20" viewBox="0 0 20 20"><circle cx="10" cy="10" r="10" fill="#bbb" /><path d="M9 4.500h2v2H9zM8 8.500h3v5.500h1v1H8v-1h1V9.500H8z" fill="#fff" /></svg></span>
            <b>2025-10-20</b>
          </Stat>
        </Right>
      </Charts>

      <Banner>
        <svg width="30" height="28" viewBox="0 0 30 28" fill="#e95504"><path d="M0 8h3v11H0zM5.500 8 30 0v28l-8-3-1 1.500-3.500-.5-1-2h-4l-.5-2-6.500-2z" /></svg>
        <Marquee><span>停，创造你的投资传奇&gt;&gt;</span><MarqueeTail>深交所主</MarqueeTail></Marquee>
        <Divider />
        <svg width="22" height="22" viewBox="0 0 22 22" stroke={C.orange} strokeWidth="2.200"><path d="m1 1 20 20M21 1 1 21" /></svg>
      </Banner>

      <Strip />
      <BottomBar>
        <IndexBox>
          <svg width="14" height="5" viewBox="0 0 14 5"><path d="M7 0l7 5H0z" fill="#777" /></svg>
          <IndexValue>18684.16</IndexValue>
          <IndexName><em>塑料制品</em>0.72%</IndexName>
        </IndexBox>
        <Action>
          <svg width="44" height="40" viewBox="0 0 44 40" fill="none" stroke="#666" strokeWidth="2">
            <path d="M13 4.200A18 18 0 0 1 38.500 28M32 35.500A18 18 0 0 1 5.500 12M1 13.500 5.500 10.500v6M43 26.500l-4.500 3v-6" />
            <path d="m16 11 6 8 6-8M22 19v12M15.500 20h13M15.500 25.500h13" />
          </svg>交易
        </Action>
        <Action>
          <svg width="40" height="40" viewBox="0 0 40 40" fill="none" stroke="#666" strokeWidth="2.200">
            <path d="M28 2.500H6Q2 2.500 2 6.500v27q0 4 4 4h28q4 0 4-4V12" /><path d="M33.500 8 17 25.500" strokeWidth="4" /><path d="m35.500 5.800 2-2.300" strokeWidth="4" /><path d="m17.500 23.500-3 5 4.500-3" strokeWidth="1.500" />
          </svg>发帖
        </Action>
        <Action>
          <svg width="40" height="40" viewBox="0 0 40 40" fill="none" stroke="#666" strokeWidth="2">
            <rect x="3.500" y="4" width="14.500" height="14.500" rx="2" /><rect x="3.500" y="22.500" width="14.500" height="14.500" rx="2" /><rect x="21.500" y="22.500" width="14.500" height="14.500" rx="2" />
            <rect x="22.500" y="5" width="12.500" height="12.500" rx="2" transform="rotate(45 28.750 11.250)" />
          </svg>功能
        </Action>
        <Action>
          <svg width="40" height="40" viewBox="0 0 40 40"><circle cx="20" cy="20" r="18" fill="none" stroke="#666" strokeWidth="2" /><g fill="#666"><circle cx="12" cy="20" r="2" /><circle cx="20" cy="20" r="2" /><circle cx="28" cy="20" r="2" /></g></svg>设自选
        </Action>
      </BottomBar>
      <SystemNav>
        <svg width="24" height="26" viewBox="0 0 24 26" stroke="#8c8c8c" strokeWidth="1.800"><path d="M0 2h24M0 13h24M0 24h24" /></svg>
        <svg width="24" height="26" viewBox="0 0 24 26" fill="none" stroke="#8c8c8c" strokeWidth="1.800"><rect x="1" y="2" width="22" height="22" rx="5" /></svg>
        <svg width="24" height="26" viewBox="0 0 24 26" fill="none" stroke="#8c8c8c" strokeWidth="1.800"><path d="M22.500 3.500v19q0 1.500-1.500.8L1.500 14q-1.500-1 0-2L21 2.500q1.500-.5 1.500 1z" /></svg>
      </SystemNav>
    </Screen>
  );
}
